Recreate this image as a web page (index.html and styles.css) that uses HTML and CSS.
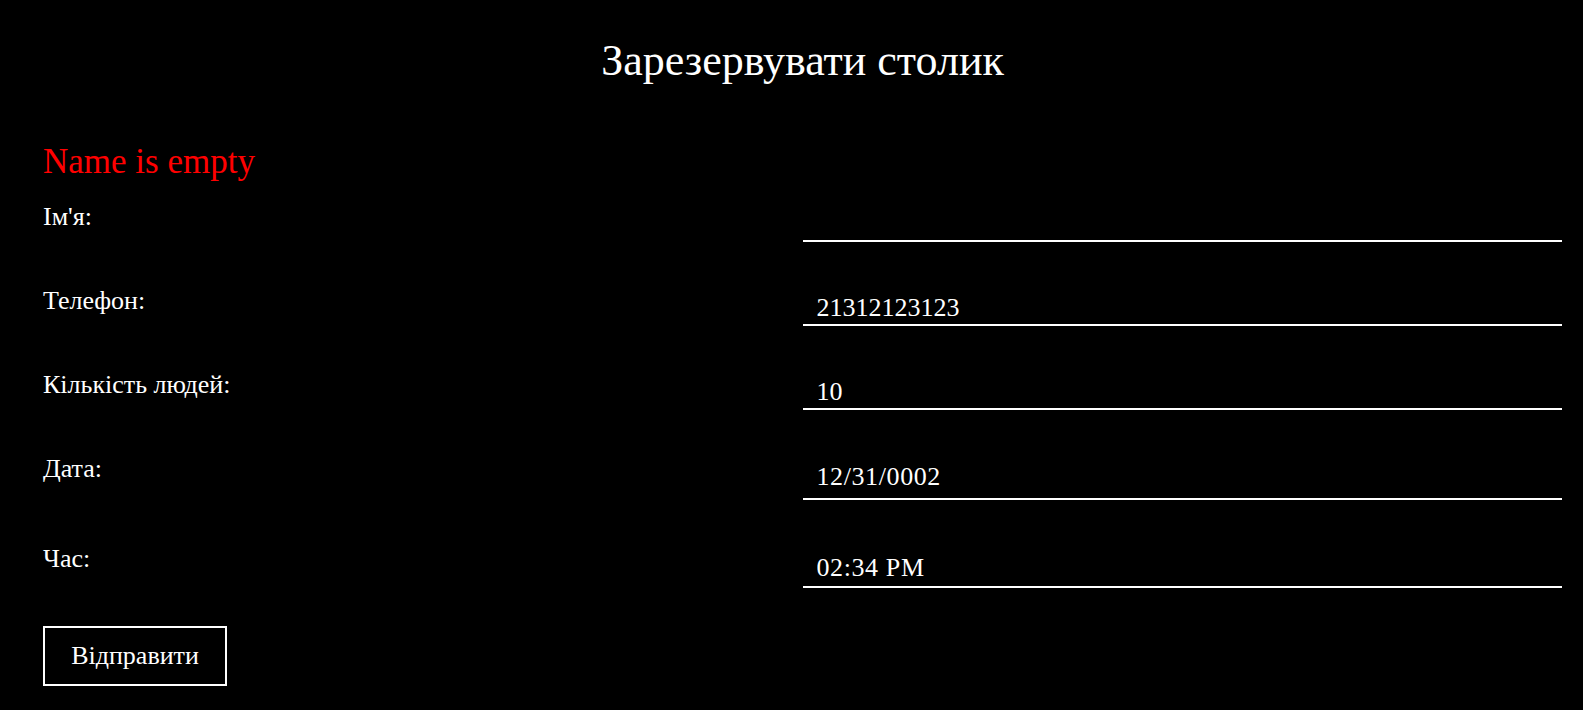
FILE: index.html
```html
<!DOCTYPE html>
<html lang="uk">
<head>
<meta charset="utf-8">
<title>Зарезервувати столик</title>
<link rel="stylesheet" href="styles.css">
</head>
<body>
<main class="page">
<h1 class="title">Зарезервувати столик</h1>
<form class="form">
  <div class="error">Name is empty</div>
  <div class="row row-first">
    <label class="label" for="name">Ім'я:</label>
    <input class="field" id="name" type="text" value="">
  </div>
  <div class="row">
    <label class="label" for="phone">Телефон:</label>
    <input class="field" id="phone" type="text" value="21312123123">
  </div>
  <div class="row">
    <label class="label" for="people">Кількість людей:</label>
    <input class="field" id="people" type="text" value="10">
  </div>
  <div class="row">
    <label class="label" for="date">Дата:</label>
    <input class="field field-date" id="date" type="text" value="12/31/0002">
  </div>
  <div class="row row-last">
    <label class="label" for="time">Час:</label>
    <input class="field field-time" id="time" type="text" value="02:34 PM">
  </div>
  <button class="submit" type="button">Відправити</button>
</form>
</main>
</body>
</html>
```
FILE: styles.css
```css
html, body {
  margin: 0;
  padding: 0;
  background: #000;
  color: #fff;
  font-family: "Liberation Serif", "Times New Roman", serif;
}

.page {
  margin: 0 21px 0 43px;
}

.title {
  margin: 35px 0 0;
  font-size: 44px;
  font-weight: normal;
  line-height: 51px;
  text-align: center;
}

.form {
  margin-top: 56px;
  display: flex;
  flex-direction: column;
}

.error {
  color: #ff0000;
  font-size: 35px;
  line-height: 40px;
}

.row {
  display: grid;
  grid-template-columns: 1fr 1fr;
  align-items: start;
  margin-bottom: 45px;
}

.row-first {
  margin-top: 21px;
}

.label {
  font-size: 26px;
  line-height: 28px;
}

.field {
  box-sizing: border-box;
  width: 100%;
  margin: 0;
  height: 39px;
  padding: 6px 14px 2px;
  font-family: inherit;
  font-size: 26px;
  line-height: 29px;
  color: #fff;
  background: transparent;
  border: none;
  border-bottom: 2px solid #fff;
  border-radius: 0;
  outline: none;
}

.field-date {
  height: 45px;
  padding: 7px 14px 7px;
  letter-spacing: 0.6px;
}

.field-time {
  height: 43px;
  padding: 8px 14px 4px;
  letter-spacing: 0.6px;
}

.row-last {
  margin-bottom: 38px;
}

.submit {
  align-self: flex-start;
  box-sizing: border-box;
  width: 184px;
  height: 60px;
  padding: 0;
  font-family: inherit;
  font-size: 26px;
  color: #fff;
  background: #000;
  border: 2px solid #fff;
  border-radius: 0;
}
```
